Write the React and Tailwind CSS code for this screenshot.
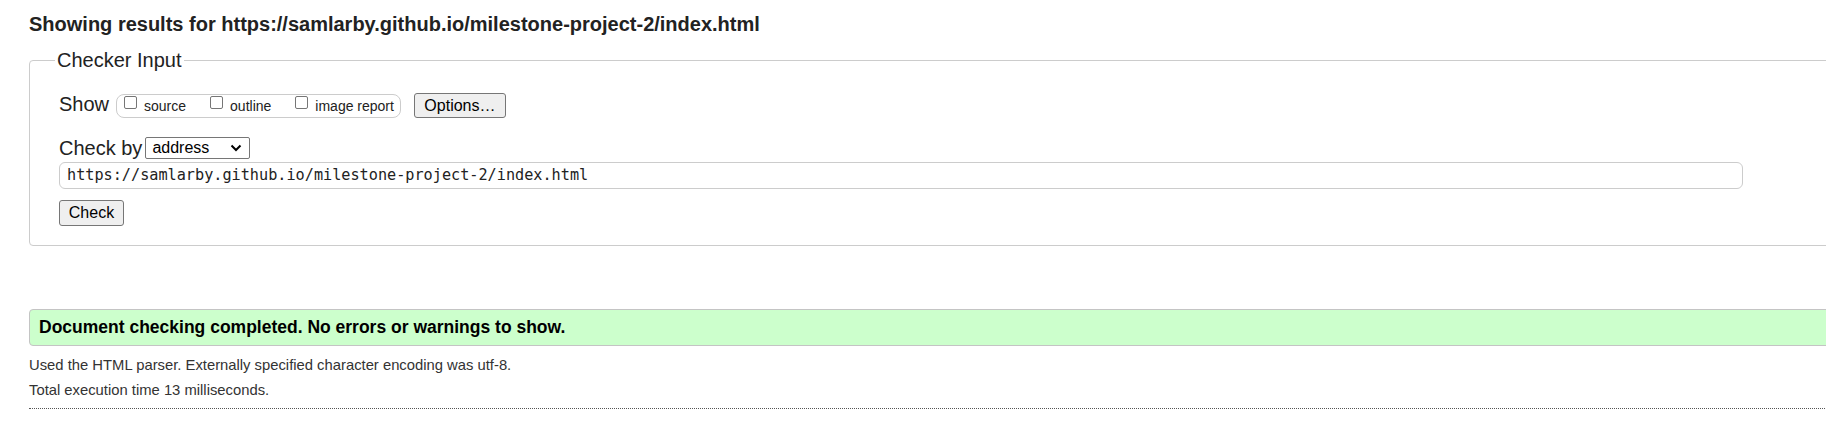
import React from 'react';

const url = 'https://samlarby.github.io/milestone-project-2/index.html';

// Native-looking unchecked checkbox
const Box = ({ className = '' }) => (
    <span className={`inline-block w-[13px] h-[13px] shrink-0 border border-[#767676] rounded-[2px] bg-white -mt-[6px] ${className}`} />
);

const Option = ({ label, first = false }) => (
    <>
        <Box className={first ? 'ml-[7px]' : 'ml-[24px]'} />
        <span className="ml-[7px] text-[14px] leading-[16px] text-[#222]">{label}</span>
    </>
);

// Grey system button
const SysButton = ({ children, className = '' }) => (
    <button className={`flex items-center justify-center bg-[#efefef] border border-[#767676] rounded-[3px] text-[16px] leading-[18px] text-black ${className}`}>
        {children}
    </button>
);

function App() {
    return (
        <div className="min-h-screen w-full overflow-hidden bg-white text-[#222] font-['Liberation_Sans',Arial,sans-serif]">
            <div className="w-[1900px] pl-[29px]">
                <h2 className="pt-[12px] text-[20px] leading-[24px] font-bold text-[#222]">
                    Showing results for {url}
                </h2>

                <fieldset className="mt-[12px] w-[1850px] border border-[#cccccc] rounded-[4px] pl-[25px] pb-[19px]">
                    <legend className="px-[2px] text-[20px] leading-[24px] text-[#222]">Checker Input</legend>

                    <div className="pl-[4px]">
                        {/* Show row */}
                        <div className="mt-[21px] h-[25px] flex items-center">
                            <span className="text-[20px] leading-[24px] -mt-[3px]">Show</span>
                            <div className="ml-[7px] h-[24px] flex items-center border border-[#cccccc] rounded-[8px] pr-[6px]">
                                <Option label="source" first />
                                <Option label="outline" />
                                <Option label="image report" />
                            </div>
                            <SysButton className="ml-[13px] w-[92px] h-[25px]">Options…</SysButton>
                        </div>

                        {/* Check by row */}
                        <div className="mt-[19px] h-[22px] flex items-center">
                            <span className="text-[20px] leading-[24px]">Check by</span>
                            <div className="ml-[3px] w-[105px] h-[22px] flex items-center justify-between border border-[#767676] rounded-[2px] bg-white pl-[6px] pr-[7px]">
                                <span className="text-[16px] leading-[18px] text-black">address</span>
                                <svg width="12" height="8" viewBox="0 0 12 8" fill="none">
                                    <path d="M1.5 1.5 L6 6 L10.5 1.5" stroke="#000" strokeWidth="2" />
                                </svg>
                            </div>
                        </div>

                        {/* Address input */}
                        <div className="mt-[3px] w-[1684px] h-[27px] flex items-center border border-[#cccccc] rounded-[6px] pl-[7px] font-['DejaVu_Sans_Mono',monospace] text-[15.2px] text-[#222]">
                            {url}
                        </div>

                        <SysButton className="mt-[11px] w-[65px] h-[26px]">Check</SysButton>
                    </div>
                </fieldset>

                <div className="mt-[63px] w-[1850px] h-[37px] flex items-center bg-[#ccffcc] border border-[#c4c4c4] rounded-[4px] pl-[9px]">
                    <span className="text-[17.5px] font-bold text-black">
                        Document checking completed. No errors or warnings to show.
                    </span>
                </div>

                <p className="mt-[9px] text-[14.8px] leading-[20px] text-[#333]">
                    Used the HTML parser. Externally specified character encoding was utf-8.
                </p>
                <p className="mt-[5px] text-[14.8px] leading-[20px] text-[#333]">
                    Total execution time 13 milliseconds.
                </p>
                <div className="mt-[8px] w-[1850px] border-t border-dotted border-[#555]" />
            </div>
        </div>
    );
}

export default App;
